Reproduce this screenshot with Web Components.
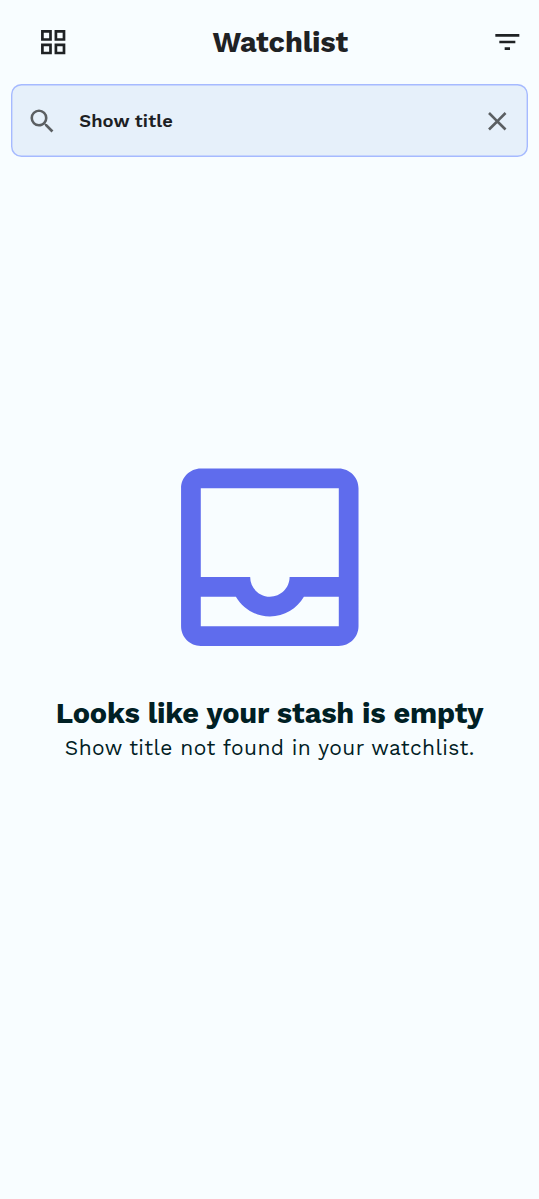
<!DOCTYPE html>
<html lang="en"><head><meta charset="utf-8"><title>Watchlist</title>
<style>html,body{margin:0;height:100%;background:#f8fdff}body{font-family:"Work Sans",Inter,sans-serif}</style></head><body>
<watch-page></watch-page>
<script>
const define=(name,html)=>customElements.define(name,class extends HTMLElement{
  constructor(){super();this.attachShadow({mode:'open'}).innerHTML=html;}
});
const icons={
  grid:'M3 3v8h8V3H3zm6 6H5V5h4v4zm-6 4v8h8v-8H3zm6 6H5v-4h4v4zm4-16v8h8V3h-8zm6 6h-4V5h4v4zm-6 4v8h8v-8h-8zm6 6h-4v-4h4v4z',
  filter:'M10 18h4v-2h-4v2zM3 6v2h18V6H3zm3 7h12v-2H6v2z',
  search:'M15.5 14h-.79l-.28-.27A6.471 6.471 0 0 0 16 9.5 6.5 6.5 0 1 0 9.5 16c1.61 0 3.09-.59 4.23-1.57l.27.28v.79l5 4.99L20.49 19l-4.99-5zm-6 0C7.01 14 5 11.99 5 9.5S7.01 5 9.5 5 14 7.01 14 9.5 11.99 14 9.5 14z',
  close:'M19 6.41L17.59 5 12 10.59 6.41 5 5 6.41 10.59 12 5 17.59 6.41 19 12 13.41 17.59 19 19 17.59 13.41 12z',
  inbox:'M19 3H5c-1.1 0-2 .9-2 2v14c0 1.1.9 2 2 2h14c1.1 0 2-.9 2-2V5c0-1.1-.9-2-2-2zm0 16H5v-3h3.56c.69 1.19 1.97 2 3.45 2s2.75-.81 3.45-2H19v3zm0-5h-4.99c0 1.1-.9 2-2 2s-2-.9-2-2H5V5h14v9z'
};
customElements.define('app-icon',class extends HTMLElement{
  constructor(){super();this.attachShadow({mode:'open'}).innerHTML=`<style>:host{display:block;flex:none;width:var(--size,31.5px);height:var(--size,31.5px)}svg{display:block;width:100%;height:100%;fill:currentColor}path{transform:translate(var(--dx,0px),var(--dy,0px))}</style><svg viewBox="0 0 24 24"><path d="${icons[this.getAttribute('name')]}"/></svg>`;}
});
define('top-bar',`<style>
:host{display:grid;grid-template-columns:1fr auto 1fr;align-items:center;height:84px;box-sizing:border-box;padding:0 15.5px 0 37.2px;color:#1f2224}
app-icon{--size:32.4px}.end{--size:32px;--dx:-.5px;justify-self:end}
h1{margin:0;white-space:nowrap;font-size:28.875px;line-height:34px;font-weight:700;letter-spacing:-.1px}
</style><app-icon name="grid"></app-icon><h1><slot></slot></h1><app-icon class="end" name="filter"></app-icon>`);
define('search-field',`<style>
:host{display:flex;align-items:center;height:73px;box-sizing:border-box;margin:0 10.6px;padding:0 15.9px;box-shadow:inset 0 0 0 1.4px #a6baff;border-radius:10.5px;background:#e6f0fa;color:#5b5f62}
span{flex:1;margin-left:21.2px;color:#1c2023;font-size:18.375px;line-height:24px;font-weight:600;letter-spacing:.13px}
app-icon{margin-top:1px;--dx:.4px;--dy:.4px}
</style><app-icon name="search"></app-icon><span><slot></slot></span><app-icon name="close"></app-icon>`);
define('empty-state',`<style>
:host{display:flex;flex-direction:column;align-items:center;padding-top:281.9px;color:#002024}
app-icon{--size:236.6px;--dx:.05px;color:#5f6ced}
h2{margin:19.6px 0 0;font-size:28.875px;line-height:36px;font-weight:700;letter-spacing:-.2px;white-space:nowrap}
p{margin:1.2px 0 0 .5px;font-size:21px;line-height:32px;letter-spacing:.37px;font-weight:430;white-space:nowrap}
</style><app-icon name="inbox"></app-icon><h2><slot name="heading"></slot></h2><p><slot></slot></p>`);
define('watch-page',`<style>:host{display:block;min-height:1199px;overflow:hidden;background:#f8fdff}</style>
<top-bar>Watchlist</top-bar><search-field>Show title</search-field>
<empty-state><span slot="heading">Looks like your stash is empty</span>Show title not found in your watchlist.</empty-state>`);
</script></body></html>
